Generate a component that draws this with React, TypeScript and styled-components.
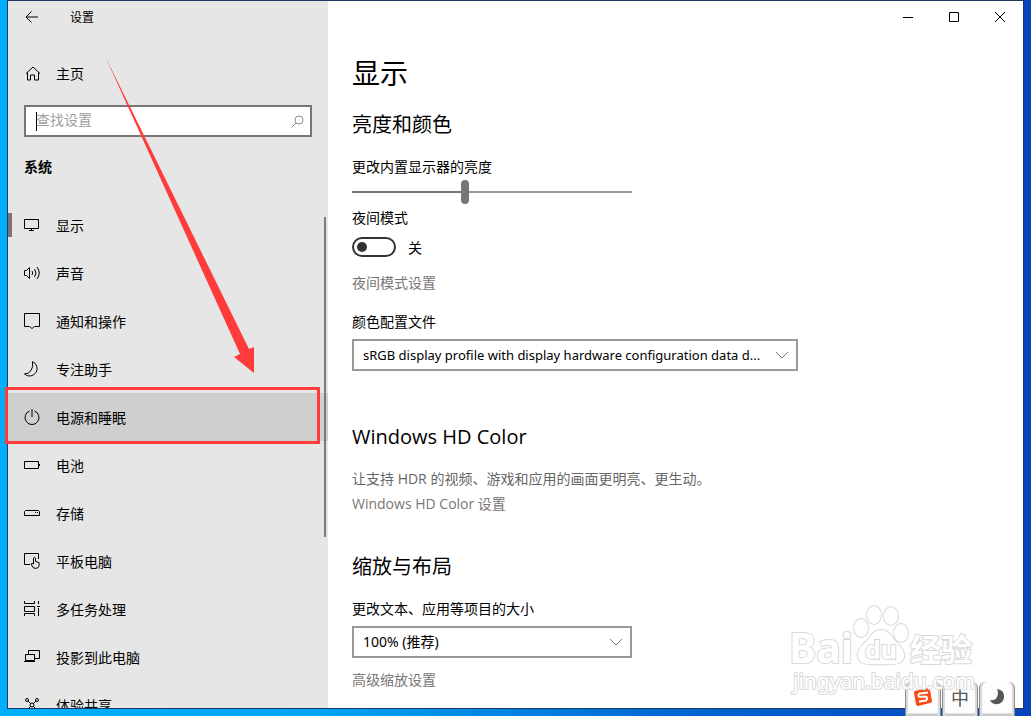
import React from "react";
import styled, { createGlobalStyle } from "styled-components";

const GlobalStyle = createGlobalStyle`
  *, *::before, *::after { box-sizing: border-box; }
  body { margin: 0; }
  body, button, input, select {
    font-family: "Open Sans", "Noto Sans CJK SC", sans-serif;
    font-size: 14px;
    color: #000;
  }
`;

const Desktop = styled.div`
  position: relative;
  display: flex;
  height: 100vh;
  padding: 0 7px 7px;
  overflow: hidden;
  background: linear-gradient(90deg, #00aefb 0%, #00a6f5 30%, #0069d2 64%, #0553c6 85%, #0743bb 100%);
`;

const Window = styled.div`
  display: flex;
  flex: 1;
  min-width: 0;
  border: 1px solid #1c3a5e;
  background: #fff;
`;

const Sidebar = styled.aside`
  position: relative;
  display: flex;
  flex-direction: column;
  width: 320px;
  flex-shrink: 0;
  background: #e6e6e6;
`;

const TitleBar = styled.header`
  display: flex;
  align-items: center;
  height: 32px;
  flex-shrink: 0;
  font-size: 12px;
`;

const PlainButton = styled.button<{ $width: number }>`
  display: flex;
  align-items: center;
  justify-content: center;
  width: ${(p) => p.$width}px;
  height: 32px;
  padding: 0;
  border: 0;
  background: transparent;
`;

const AppName = styled.span`
  margin-left: 14px;
`;

const HomeLink = styled.a`
  display: flex;
  align-items: center;
  gap: 14px;
  height: 48px;
  margin-top: 16px;
  padding-left: 16px;
  flex-shrink: 0;
  color: #000;
  text-decoration: none;
`;

const SearchBox = styled.label`
  display: flex;
  align-items: center;
  height: 32px;
  margin: 8px 16px 0;
  padding: 0 6px 0 10px;
  flex-shrink: 0;
  border: 2px solid #7a7574;
  background: #fff;
`;

const Caret = styled.span`
  width: 1px;
  height: 19px;
  margin-right: -1px;
  background: #000;
`;

const SearchInput = styled.input`
  flex: 1;
  min-width: 0;
  height: 28px;
  padding: 0 0 3px;
  border: 0;
  outline: 0;
  background: transparent;
  &::placeholder { color: #a0a0a0; opacity: 1; }
`;

const GroupTitle = styled.h2`
  margin: 0 16px 4px;
  flex-shrink: 0;
  font-size: 14px;
  font-weight: 700;
  line-height: 60px;
`;

const NavList = styled.nav`
  flex: 1;
  min-height: 0;
  overflow: hidden;
`;

const NavItem = styled.a<{ $hovered?: boolean; $current?: boolean }>`
  display: flex;
  align-items: center;
  gap: 16px;
  height: 48px;
  padding-left: ${(p) => (p.$current ? 0 : 16)}px;
  background: ${(p) => (p.$hovered ? "#cfcfcf" : "transparent")};
  color: #000;
  text-decoration: none;
  &::before {
    content: "";
    display: ${(p) => (p.$current ? "block" : "none")};
    width: 4px;
    height: 24px;
    margin-right: -4px;
    background: #7a7574;
  }
`;

const ScrollThumb = styled.div`
  position: absolute;
  top: 216px;
  right: 2px;
  width: 2px;
  height: 320px;
  background: #7a7a7a;
`;

const Main = styled.main`
  flex: 1;
  min-width: 0;
  overflow: hidden;
`;

const WindowButtons = styled.div`
  display: flex;
  justify-content: flex-end;
`;

const Content = styled.div`
  padding: 18px 24px 0;
`;

const PageTitle = styled.h1`
  margin: 0;
  font-size: 28px;
  font-weight: 400;
  line-height: 44px;
`;

const Section = styled.section<{ $top: number }>`
  display: flex;
  flex-direction: column;
  align-items: flex-start;
  margin-top: ${(p) => p.$top}px;
`;

const SectionTitle = styled.h2`
  margin: 0 0 16px;
  font-size: 20px;
  font-weight: 400;
  line-height: 32px;
`;

const Label = styled.label`
  line-height: 20px;
`;

const Slider = styled.input`
  appearance: none;
  width: 280px;
  height: 24px;
  margin: 3px 0 4px;
  background: linear-gradient(90deg, #7a7574 40%, #999 40%) center / 100% 2px no-repeat;
  &::-webkit-slider-thumb {
    appearance: none;
    width: 8px;
    height: 24px;
    border-radius: 4px;
    background: #7a7574;
  }
`;

const ToggleRow = styled.label`
  display: flex;
  align-items: center;
  gap: 12px;
  height: 20px;
  margin: 9px 0 16px;
`;

const Toggle = styled.input`
  appearance: none;
  display: flex;
  align-items: center;
  width: 44px;
  height: 20px;
  margin: 0;
  padding-left: 3px;
  border: 2px solid #333;
  border-radius: 10px;
  &::before {
    content: "";
    width: 10px;
    height: 10px;
    border-radius: 5px;
    background: #333;
  }
`;

const TextLink = styled.a`
  color: #7a7574;
  line-height: 20px;
  text-decoration: none;
`;

const FieldLabel = styled(Label)<{ $top: number }>`
  margin: ${(p) => p.$top}px 0 7px;
`;

const SelectWrap = styled.div<{ $width: number }>`
  position: relative;
  width: ${(p) => p.$width}px;
  max-width: 100%;
  margin-bottom: 12px;
  svg {
    position: absolute;
    top: 11px;
    right: 9px;
    pointer-events: none;
  }
`;

const Select = styled.select<{ $compact?: boolean }>`
  appearance: none;
  display: block;
  width: 100%;
  height: 32px;
  padding: 0 24px 1px 9px;
  border: 2px solid #999;
  border-radius: 0;
  background: #fff;
  font-family: "Noto Sans", "Noto Sans CJK SC", sans-serif;
  font-size: ${(p) => (p.$compact ? 13 : 14)}px;
`;

const Note = styled.p`
  margin: 0 0 5px;
  color: #666;
  line-height: 20px;
`;

const Annotation = styled.svg`
  position: absolute;
  top: 0;
  left: 0;
  pointer-events: none;
`;

const Watermark = styled.svg`
  position: absolute;
  right: 43px;
  bottom: 16px;
  pointer-events: none;
  font-family: "Noto Sans", "Noto Sans CJK SC", sans-serif;
  paint-order: stroke;
`;

const ImeBar = styled.div`
  position: absolute;
  right: 16px;
  bottom: 0;
  display: flex;
  gap: 1px;
`;

const ImeKey = styled.button`
  display: flex;
  align-items: center;
  justify-content: center;
  width: 36px;
  height: 34px;
  padding: 0 0 4px;
  border: solid #8d8d8d;
  border-width: 0 1px;
  border-radius: 6px 6px 0 0;
  background: linear-gradient(#fdfdfd 31px, #c9c9c9 32px);
  box-shadow: inset 2px 0 #d9d9d9, inset -2px 0 #d9d9d9;
  color: #555;
  font-size: 18px;
`;

const Icon = ({ children, size = 16 }: { children: React.ReactNode; size?: number }) => (
  <svg width={size} height={size} viewBox={`0 0 ${size} ${size}`} fill="none" stroke="#000" aria-hidden="true">
    {children}
  </svg>
);

const navItems = [
  { label: "显示", icon: <path d="M.5 2.500h14v9H.5zM7.500 11.500v2M5 13.500h5" /> },
  {
    label: "声音",
    icon: <path d="M.5 5.500h2L5.500 2.500v11L2.500 10.500h-2zM8 6q1.500 2 0 4M10.500 4q3 4 0 8M13 2q4.500 6 0 12" />,
  },
  { label: "通知和操作", icon: <path d="M.5.5h15v13h-5L8 15.500 5.500 13.500h-5z" /> },
  { label: "专注助手", icon: <path d="M8.500.600a7.500 7.500 0 1 1-8 12.400q4 0 6.500-3.500T8.500.600z" /> },
  { label: "电源和睡眠", icon: <path d="M5.500 2a7 7 0 1 0 5 0M8 0v8" /> },
  { label: "电池", icon: <path d="M.5 4.500h14v7H.5zM15.500 7v2" /> },
  { label: "存储", icon: <path d="M1.500 5.500h13l1 1v4H.5v-4zM11 7.500h1M13 7.500h1" /> },
  {
    label: "平板电脑",
    icon: <path d="M6 11.500H.5V.5h14V6M9.500 11V5q1-1.500 2 0V8.500l3.500 1q1 4-1.500 5.500-2.500 1-4.500-.5L7 11q1-1.500 2.500 0" />,
  },
  { label: "多任务处理", icon: <path d="M.5 0v2.500h10V0M.5 5.500h10v5H.5zM.5 15v-2.500h10V15M14.500 0v3M14.500 7v8M13 5.500h3" /> },
  { label: "投影到此电脑", icon: <path d="M4.500 5.500V1.500h11v8h-5M1.500 5.500h9v6h-9zM0 12.500h11" /> },
  {
    label: "体验共享",
    icon: (
      <>
        <circle cx="3" cy="3" r="1.500" />
        <circle cx="13" cy="3" r="1.500" />
        <circle cx="8" cy="8" r="2" />
        <circle cx="3" cy="13" r="1.500" />
        <circle cx="13" cy="13" r="1.500" />
        <path d="M4 4l3 3M12 4L9 7M4 12l3-3M12 12L9 9" />
      </>
    ),
  },
];

const Chevron = () => (
  <svg width="14" height="10" viewBox="0 0 14 10" fill="none" stroke="#777" aria-hidden="true">
    <path d="M1 2l6 6 6-6" />
  </svg>
);

export default function App() {
  return (
    <>
      <GlobalStyle />
      <Desktop>
        <Window>
          <Sidebar>
            <TitleBar>
              <PlainButton $width={48} aria-label="返回">
                <Icon>
                  <path d="M2 8h12M7.500 2.500L2 8l5.500 5.500" />
                </Icon>
              </PlainButton>
              <AppName>设置</AppName>
            </TitleBar>
            <HomeLink href="#home">
              <Icon size={18}>
                <path d="M2 9.500L9 3l7 6.500M3.500 8.500V16h3v-5h4v5h4V8.500" />
              </Icon>
              主页
            </HomeLink>
            <SearchBox>
              <Caret />
              <SearchInput type="text" placeholder="查找设置" aria-label="查找设置" />
              <svg width="13" height="13" viewBox="0 0 13 13" fill="none" stroke="#888" aria-hidden="true">
                <circle cx="8" cy="5" r="4" />
                <path d="M5 8L.5 12.500" />
              </svg>
            </SearchBox>
            <GroupTitle>系统</GroupTitle>
            <NavList>
              {navItems.map((item, i) => (
                <NavItem key={item.label} href={`#${item.label}`} $current={i === 0} $hovered={i === 4}>
                  <Icon>{item.icon}</Icon>
                  {item.label}
                </NavItem>
              ))}
            </NavList>
            <ScrollThumb />
          </Sidebar>
          <Main>
            <WindowButtons>
              <PlainButton $width={46} aria-label="最小化">
                <Icon size={10}><path d="M0 5.500h10" /></Icon>
              </PlainButton>
              <PlainButton $width={46} aria-label="最大化">
                <Icon size={10}><path d="M.5.5h9v9h-9z" /></Icon>
              </PlainButton>
              <PlainButton $width={46} aria-label="关闭">
                <Icon size={10}><path d="M0 0l10 10M10 0L0 10" /></Icon>
              </PlainButton>
            </WindowButtons>
            <Content>
              <PageTitle>显示</PageTitle>
              <Section $top={14}>
                <SectionTitle>亮度和颜色</SectionTitle>
                <Label htmlFor="brightness">更改内置显示器的亮度</Label>
                <Slider id="brightness" type="range" defaultValue={40} />
                <Label htmlFor="night">夜间模式</Label>
                <ToggleRow>
                  <Toggle id="night" type="checkbox" role="switch" />
                  关
                </ToggleRow>
                <TextLink href="#night-settings">夜间模式设置</TextLink>
                <FieldLabel $top={19} htmlFor="profile">颜色配置文件</FieldLabel>
                <SelectWrap $width={446}>
                  <Select id="profile" $compact>
                    <option>sRGB display profile with display hardware configuration data d...</option>
                  </Select>
                  <Chevron />
                </SelectWrap>
              </Section>
              <Section $top={38}>
                <SectionTitle>Windows HD Color</SectionTitle>
                <Note>让支持 HDR 的视频、游戏和应用的画面更明亮、更生动。</Note>
                <TextLink href="#hd-color">Windows HD Color 设置</TextLink>
              </Section>
              <Section $top={37}>
                <SectionTitle>缩放与布局</SectionTitle>
                <FieldLabel $top={0} htmlFor="scale">更改文本、应用等项目的大小</FieldLabel>
                <SelectWrap $width={280}>
                  <Select id="scale">
                    <option>100% (推荐)</option>
                  </Select>
                  <Chevron />
                </SelectWrap>
                <TextLink href="#scaling">高级缩放设置</TextLink>
              </Section>
            </Content>
          </Main>
        </Window>
        <Annotation width="330" height="450" viewBox="0 0 330 450" aria-hidden="true">
          <path d="M105 56L249 349l5-2v26l-20-16 6-3z" fill="#ff3b3b" />
          <rect x="6.500" y="388.500" width="312" height="54" fill="none" stroke="#ff3b3b" strokeWidth="3" />
        </Annotation>
        <ImeBar>
          <ImeKey aria-label="搜狗输入法">
            <svg width="18" height="18" viewBox="0 0 18 18" aria-hidden="true">
              <path d="M1 3L14 0q2 0 2 2l2 11q0 2-2 2L4 18q-2 0-2-2L0 5q0-2 1-2z" fill="#fa4b14" />
              <path d="M14 4.500L6 5.500q-3 1.500-.5 3.500l6-.5q3 1 .5 4L5 13.500" fill="none" stroke="#fff" strokeWidth="2" />
            </svg>
          </ImeKey>
          <ImeKey>中</ImeKey>
          <ImeKey aria-label="半角">
            <svg width="16" height="16" viewBox="0 0 16 16" aria-hidden="true">
              <path d="M8 0q8 1 7 9-2 7-9 6-4-1-5-4 5 1 7-3 2-4 0-8z" fill="#555" />
            </svg>
          </ImeKey>
        </ImeBar>
        <Watermark width="200" height="100" viewBox="0 0 200 100" fill="#fff" stroke="#d9d9d9" strokeWidth="2">
          <text x="1" y="63" fontSize="41" fontWeight="700">Bai</text>
          <ellipse cx="73" cy="28" rx="7" ry="9" />
          <ellipse cx="86" cy="15" rx="7" ry="9" />
          <ellipse cx="103" cy="16" rx="7" ry="9" />
          <ellipse cx="113" cy="33" rx="7" ry="9" />
          <path d="M93 30q7 0 12 8l9 11q5 8-1 13-4 3-20 2-16 1-20-2-6-6-1-14l9-10q5-8 12-8z" />
          <text x="77" y="59" fontSize="25" fontWeight="700">du</text>
          <text x="122" y="61" fontSize="31" fontWeight="700">经验</text>
          <text x="5" y="89" fontSize="21">jingyan.baidu.com</text>
        </Watermark>
      </Desktop>
    </>
  );
}
